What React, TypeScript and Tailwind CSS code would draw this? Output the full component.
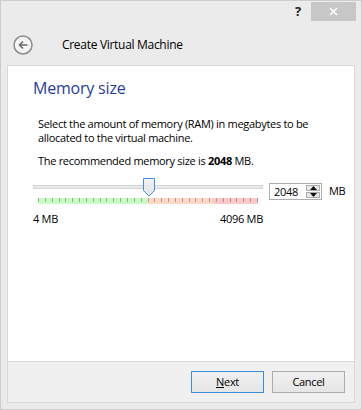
import React from "react";

const TICKS = Array.from({ length: 33 }, (_, i) => i);

function BackIcon() {
  return (
    <svg width="20" height="20" viewBox="0 0 20 20" fill="none">
      <circle cx="10" cy="10" r="9" stroke="#8c8c8c" strokeWidth="1.5" fill="#f4f4f4" />
      <path d="M14.5 10H6.5M10 6.5L6.5 10L10 13.5" stroke="#6a6a6a" strokeWidth="1.6" />
    </svg>
  );
}

function Handle() {
  return (
    <svg width="12" height="19" viewBox="0 0 12 19">
      <defs>
        <linearGradient id="hg" x1="0" y1="0" x2="0" y2="1">
          <stop offset="0" stopColor="#f2f2f2" />
          <stop offset="1" stopColor="#e2e2e2" />
        </linearGradient>
      </defs>
      <path d="M0.5 0.5H11.5V12.5L6 18.2L0.5 12.5Z" fill="url(#hg)" stroke="#3d8ee3" />
    </svg>
  );
}

function SpinBox() {
  return (
    <div className="flex h-[17px] w-[53px] items-stretch border border-[#abadb3] bg-white">
      <span className="flex-1 pl-[4px] text-[11px] leading-[15px]">2048</span>
      <div className="my-[1px] mr-[1px] flex w-[14px] flex-col gap-px">
        <div className="flex flex-1 items-center justify-center border border-[#acacac] bg-[#e8e8e8]">
          <svg width="7" height="4" viewBox="0 0 7 4"><path d="M0 4L3.5 0L7 4Z" fill="#111" /></svg>
        </div>
        <div className="flex flex-1 items-center justify-center border border-[#acacac] bg-[#e8e8e8]">
          <svg width="7" height="4" viewBox="0 0 7 4"><path d="M0 0L3.5 4L7 0Z" fill="#111" /></svg>
        </div>
      </div>
    </div>
  );
}

export default function App() {
  return (
    <div className="flex h-[410px] w-[362px] flex-col border border-[#cdcdcd] bg-[#ebebeb] font-['Segoe_UI','Open_Sans',sans-serif] text-[11px] tracking-[-0.3px] text-black">
      {/* Title bar */}
      <div className="flex h-[20px] items-start justify-end pr-[5px]">
        <span className="mr-[10px] mt-[2px] text-[13px] font-bold leading-[16px] text-[#222]">?</span>
        <div className="mt-[1px] flex h-[19px] w-[45px] items-center justify-center bg-[#c7c7c7]">
          <svg width="9" height="9" viewBox="0 0 9 9"><path d="M1 1L8 8M8 1L1 8" stroke="#fff" strokeWidth="1.6" /></svg>
        </div>
      </div>

      {/* Header */}
      <div className="flex h-[44px] items-center pl-[12px] pt-[4px]">
        <BackIcon />
        <span className="ml-[29px] text-[12px]">Create Virtual Machine</span>
      </div>

      {/* Wizard page */}
      <div className="mx-[6px] mb-[6px] flex flex-1 flex-col border border-[#d9d9d9]">
        <div className="flex-1 bg-white pl-[25px] pt-[12px]">
          <h1 className="text-[16px] leading-[21px] tracking-[-0.2px] text-[#1f3e9e]">Memory size</h1>
          <div className="pl-[5px] pt-[18px]">
            <p className="leading-[14px]">
              Select the amount of memory (RAM) in megabytes to be allocated to the virtual machine.
            </p>
            <p className="mt-[9px] leading-[14px]">
              The recommended memory size is <b>2048</b> MB.
            </p>
          </div>

          {/* Slider row */}
          <div className="mt-[10px] flex items-start">
            <div className="relative w-[230px]">
              <div className="mt-[7px] h-[4px] border border-[#d6d6d6] bg-[#e7eaea]" />
              <div className="absolute left-[110px] top-0">
                <Handle />
              </div>
              <div className="relative mx-[5px] mt-[9px] flex h-[6px]">
                <div className="w-[110px] bg-[#c9fcc4]" />
                <div className="w-[65px] bg-[#ffd9c8]" />
                <div className="flex-1 bg-[#ffc8c8]" />
                <div className="absolute inset-x-0 top-0 flex h-[4px] justify-between">
                  {TICKS.map((i) => (
                    <div key={i} className={i === 16 || i === 26 ? "w-px bg-[#c79a86]" : "w-px bg-black/30"} />
                  ))}
                </div>
              </div>
              <div className="mt-[7px] flex justify-between leading-[15px]">
                <span>4 MB</span>
                <span>4096 MB</span>
              </div>
            </div>
            <div className="ml-[6px] mt-[5px]">
              <SpinBox />
            </div>
            <span className="ml-[7px] mt-[5px] leading-[16px]">MB</span>
          </div>
        </div>

        {/* Footer */}
        <div className="flex h-[41px] items-center justify-end gap-[8px] border-t border-[#dadada] bg-[#f0f0f0] pr-[9px]">
          <button className="h-[22px] w-[73px] border border-[#3c8de0] bg-gradient-to-b from-[#f0f0f0] to-[#e5e5e5] leading-[18px]">
            <span className="underline">N</span>ext
          </button>
          <button className="h-[22px] w-[73px] border border-[#acacac] bg-gradient-to-b from-[#f0f0f0] to-[#e5e5e5] leading-[18px]">
            Cancel
          </button>
        </div>
      </div>
    </div>
  );
}
